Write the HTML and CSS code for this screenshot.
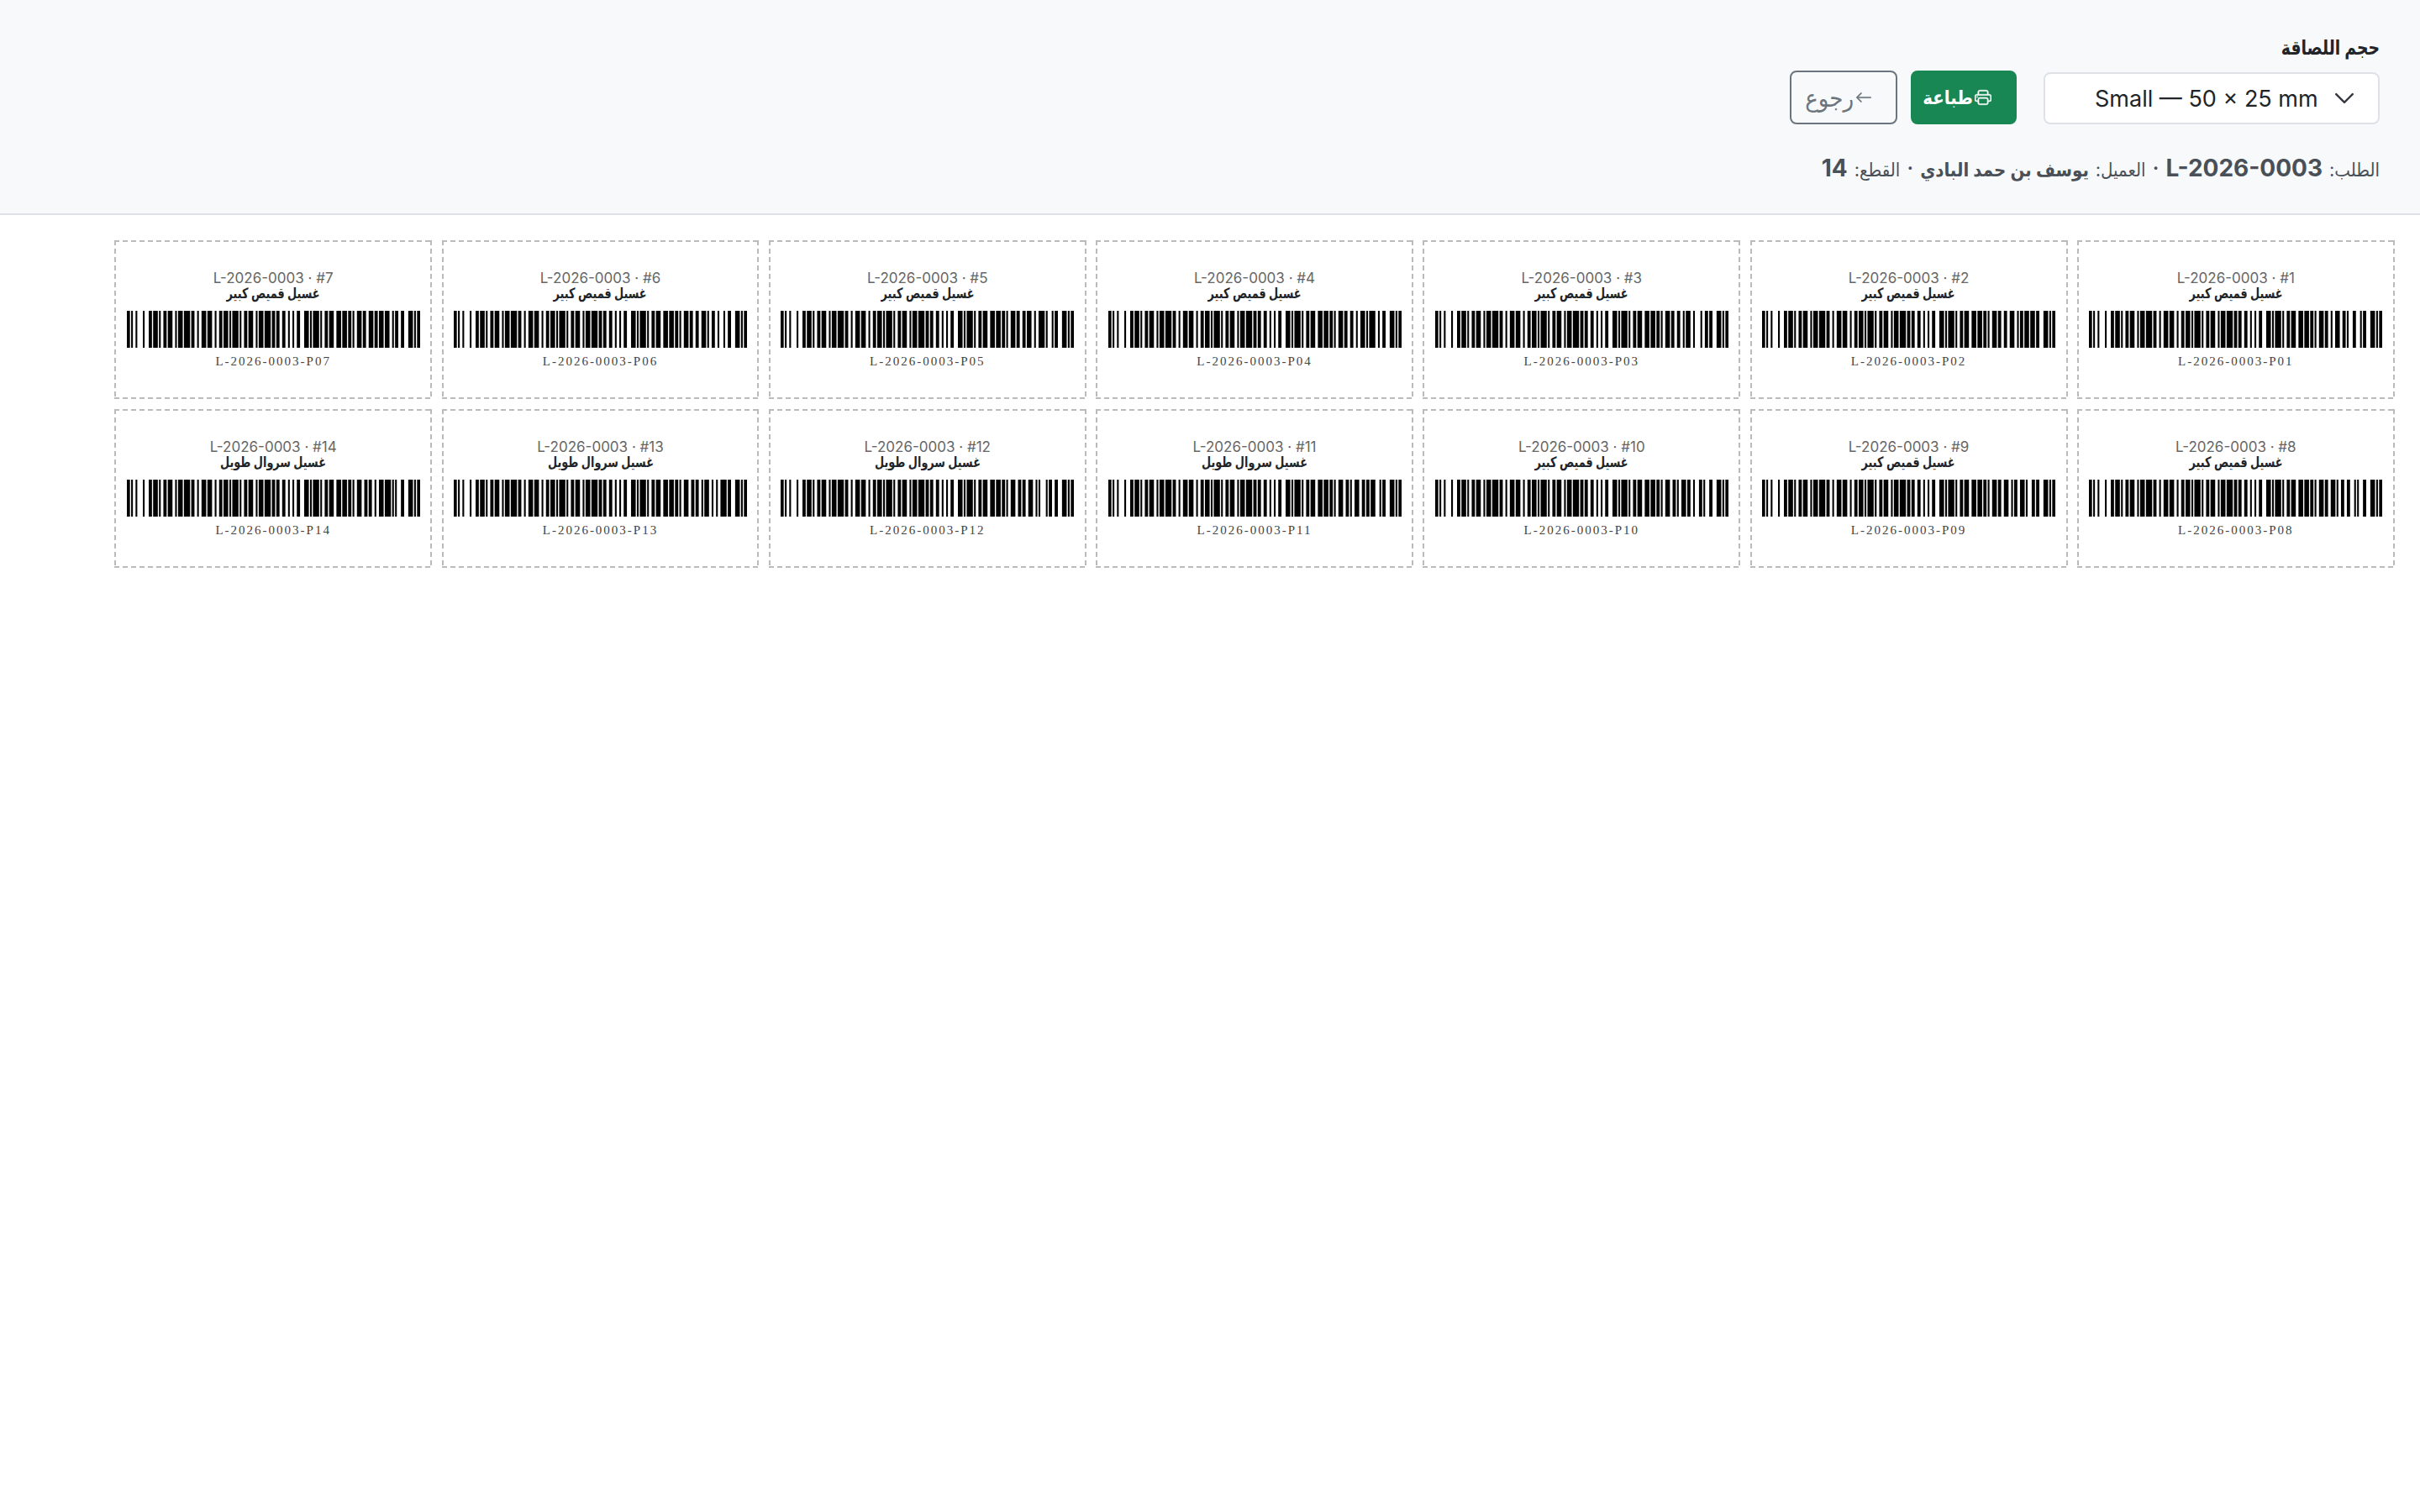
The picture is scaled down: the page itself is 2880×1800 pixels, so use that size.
FILE: index.html
```html
<!DOCTYPE html>
<html lang="ar" dir="rtl">

<head>
  <meta charset="UTF-8">
  <meta name="viewport" content="width=device-width, initial-scale=1.0">
  <title>طباعة الملصقات</title>
  <link rel="stylesheet" href="styles.css">
</head>

<body>
  <header class="toolbar">
    <div class="toolbar-row">
      <div class="size-field">
        <label class="size-label" for="size">حجم اللصاقة</label>
        <div class="size-select" id="size" dir="ltr">
          <span class="size-text">Small — 50 × 25 mm</span>
          <svg class="size-caret" viewBox="0 0 16 16"><path d="m2 5 6 6 6-6" /></svg>
        </div>
      </div>
      <button class="btn btn-print">
        <svg class="icon" viewBox="0 0 16 16" fill="currentColor">
          <path d="M2.5 8a.5.5 0 1 0 0-1 .5.5 0 0 0 0 1" />
          <path d="M5 1a2 2 0 0 0-2 2v2H2a2 2 0 0 0-2 2v3a2 2 0 0 0 2 2h1v1a2 2 0 0 0 2 2h6a2 2 0 0 0 2-2v-1h1a2 2 0 0 0 2-2V7a2 2 0 0 0-2-2h-1V3a2 2 0 0 0-2-2zM4 3a1 1 0 0 1 1-1h6a1 1 0 0 1 1 1v2H4zm1 5a2 2 0 0 0-2 2v1H2a1 1 0 0 1-1-1V7a1 1 0 0 1 1-1h12a1 1 0 0 1 1 1v3a1 1 0 0 1-1 1h-1v-1a2 2 0 0 0-2-2zm7 2v3a1 1 0 0 1-1 1H5a1 1 0 0 1-1-1v-3a1 1 0 0 1 1-1h6a1 1 0 0 1 1 1" />
        </svg>
        <span>طباعة</span>
      </button>
      <button class="btn btn-back">
        <svg class="icon" viewBox="0 0 16 16" fill="currentColor">
          <path fill-rule="evenodd" d="M15 8a.5.5 0 0 0-.5-.5H2.707l3.147-3.146a.5.5 0 1 0-.708-.708l-4 4a.5.5 0 0 0 0 .708l4 4a.5.5 0 0 0 .708-.708L2.707 8.5H14.5A.5.5 0 0 0 15 8" />
        </svg>
        <span>رجوع</span>
      </button>
    </div>
    <p class="order-info"><span class="ar">الطلب:</span> <strong>L-2026-0003</strong> · <span class="ar">العميل:</span> <strong class="ar">يوسف بن حمد البادي</strong> · <span class="ar">القطع:</span> <strong>14</strong></p>
  </header>

  <main class="sheet" id="sheet"></main>

  <script src="script.js"></script>
</body>

</html>
```

FILE: styles.css
```css
* {
  box-sizing: border-box;
}

body {
  margin: 0;
  background: #fff;
  color: #212529;
  font-family: Inter, "DejaVu Sans Condensed", "DejaVu Sans", sans-serif;
}

.toolbar {
  height: 256px;
  padding: 40px 48px 0;
  background: #f8f9fa;
  border-bottom: 2px solid #dee2e6;
}

.toolbar-row {
  display: flex;
  align-items: flex-end;
  gap: 16px;
}

.size-field {
  width: 400px;
  margin-left: 16px;
}

/* the only arabic font here runs wide, so squeeze it */
.size-label {
  display: block;
  margin-bottom: 12px;
  font-size: 24px;
  line-height: 34px;
  font-weight: 700;
  transform: scaleX(0.87);
  transform-origin: right center;
}

.size-select {
  display: flex;
  align-items: center;
  justify-content: space-between;
  height: 62px;
  padding: 0 27px 0 59px;
  background: #fff;
  border: 2px solid #dee2e6;
  border-radius: 8px;
  font-size: 27px;
  white-space: nowrap;
}

.size-caret {
  flex: none;
  width: 26px;
  height: 26px;
  fill: none;
  stroke: #343a40;
  stroke-width: 1.5;
  stroke-linecap: round;
  stroke-linejoin: round;
}

.btn {
  display: flex;
  align-items: center;
  height: 64px;
  padding: 0 28px 0 0;
  gap: 2px;
  border-radius: 8px;
  font-family: inherit;
  white-space: nowrap;
}

.btn-print {
  width: 126px;
  background: #198754;
  border: 2px solid #198754;
  color: #fff;
  font-size: 22px;
  font-weight: 600;
}

.btn-back {
  width: 128px;
  background: transparent;
  border: 2px solid #6c757d;
  color: #6c757d;
  font-size: 29px;
}

.icon {
  flex: none;
  width: 20px;
  height: 20px;
  stroke: currentColor;
  stroke-width: 0.4;
}

.order-info {
  margin: 32px 0 0;
  color: #495057;
  font-size: 28px;
  line-height: 40px;
}

.order-info .ar {
  font-size: 22px;
}

.sheet {
  display: flex;
  flex-wrap: wrap;
  gap: 3mm;
  padding: 8mm;
}

.label {
  display: flex;
  flex-direction: column;
  align-items: center;
  justify-content: center;
  width: 100mm;
  height: 50mm;
  padding: 14px;
  /* dashes are 6 on, 4 off: a dashed border comes out shorter */
  background:
    repeating-linear-gradient(to right, #bbb 0 6px, transparent 6px 10px) top / 100% 2px no-repeat,
    repeating-linear-gradient(to right, #bbb 0 6px, transparent 6px 10px) bottom / 100% 2px no-repeat,
    repeating-linear-gradient(to bottom, #bbb 0 6px, transparent 6px 10px) left / 2px 100% no-repeat,
    repeating-linear-gradient(to bottom, #bbb 0 6px, transparent 6px 10px) right / 2px 100% no-repeat;
  text-align: center;
}

.label-order {
  color: #666;
  font-size: 17px;
  line-height: 20px;
}

.label-item {
  font-size: 17px;
  line-height: 16px;
  font-weight: 700;
  transform: scaleX(0.84);
}

.label-bars {
  display: block;
  width: 349px;
  height: 44px;
  margin: 13px 0 6px;
}

.label-code {
  color: #444;
  font-family: "Liberation Serif", serif;
  font-size: 15px;
  line-height: 20px;
  letter-spacing: 2px;
}
```

FILE: script.js
```js
// code128 widths, index = symbol value
var PATTERNS = "212222 222122 222221 121223 121322 131222 122213 122312 132212 221213 221312 231212 112232 122132 122231 113222 123122 123221 223211 221132 221231 213212 223112 312131 311222 321122 321221 312212 322112 322211 212123 212321 232121 111323 131123 131321 112313 132113 132311 211313 231113 231311 112133 112331 132131 113123 113321 133121 313121 211331 231131 213113 213311 213131 311123 311321 331121 312113 312311 332111 314111 221411 431111 111224 111422 121124 121421 141122 141221 112214 112412 122114 122411 142112 142211 241211 221114 413111 241112 134111 111242 121142 121241 114212 124112 124211 411212 421112 421211 212141 214121 412121 111143 111341 131141 114113 114311 411113 411311 113141 114131 311141 411131 211412 211214 211232 2331112".split(" ");

var START_B = 104, CODE_A = 101, CODE_C = 99, STOP = 106;

// text runs stay in A/B, runs of 4+ digits switch to C (pairs)
function encode(text) {
  var codes = [START_B];
  text.split(/(\d{4,})/).forEach(function (part, idx) {
    var i;
    if (idx % 2 === 1) {
      codes.push(CODE_C);
      for (i = 0; i < part.length; i += 2) codes.push(Number(part.substr(i, 2)));
    } else {
      if (idx > 0) codes.push(CODE_A);
      for (i = 0; i < part.length; i++) codes.push(part.charCodeAt(i) - 32);
    }
  });
  var sum = codes[0];
  for (var k = 1; k < codes.length; k++) sum += codes[k] * k;
  codes.push(sum % 103, STOP);
  return codes;
}

function barcodeSvg(text) {
  var x = 0;
  var rects = "";
  encode(text).forEach(function (c) {
    var p = PATTERNS[c];
    for (var j = 0; j < p.length; j++) {
      var w = Number(p[j]);
      // a bit fatter than one module, looks heavier when printed small
      if (j % 2 === 0) rects += '<rect x="' + (x - 0.1) + '" y="0" width="' + (w + 0.2) + '" height="1"/>';
      x += w;
    }
  });
  return '<svg class="label-bars" viewBox="0 0 ' + x + ' 1" preserveAspectRatio="none">' + rects + '</svg>';
}

var sheet = document.getElementById("sheet");
var html = "";
for (var n = 1; n <= 14; n++) {
  var item = n <= 10 ? "غسيل قميص كبير" : "غسيل سروال طويل";
  var code = "L-2026-0003-P" + (n < 10 ? "0" + n : n);
  html += '<div class="label">' +
    '<div class="label-order" dir="ltr">L-2026-0003 · #' + n + '</div>' +
    '<div class="label-item">' + item + '</div>' +
    barcodeSvg(code) +
    '<div class="label-code" dir="ltr">' + code + '</div>' +
    '</div>';
}
sheet.innerHTML = html;
```
